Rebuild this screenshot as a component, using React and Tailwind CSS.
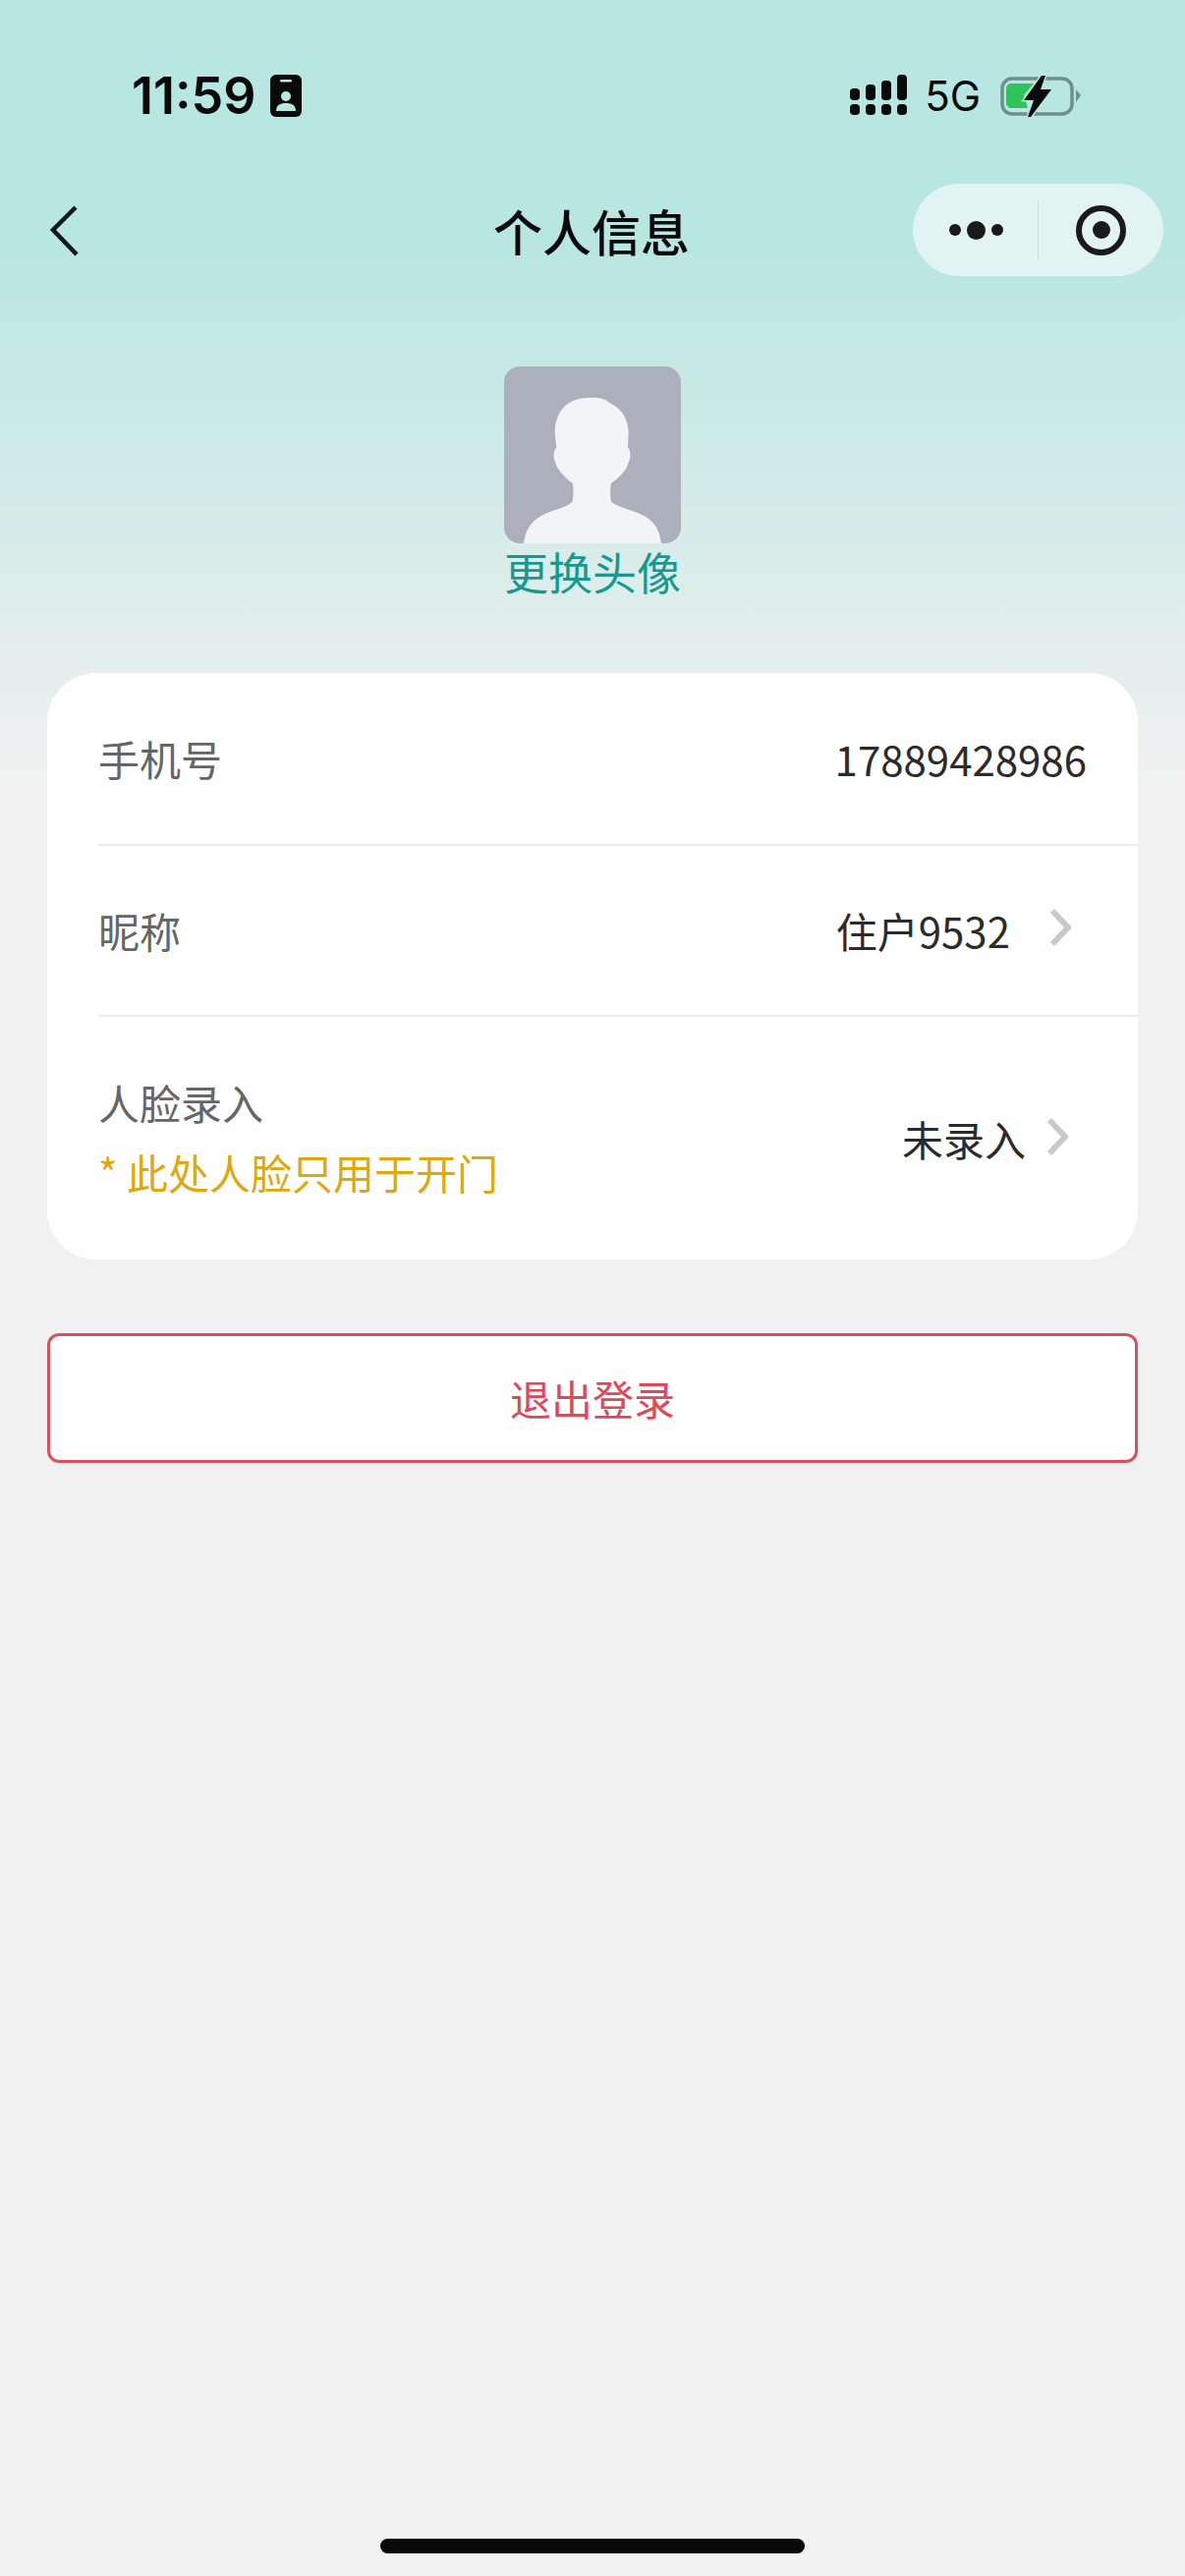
const cjk = "font-['Noto_Sans_CJK_SC','Noto_Sans',sans-serif]";

function Signal() {
  return (
    <svg width="58" height="42" viewBox="0 0 58 42" className="mt-[-2px]">
      <g fill="#0a0a0a">
        <rect x="0" y="14" width="10" height="12" rx="4" />
        <rect x="16" y="10" width="10" height="16" rx="4" />
        <rect x="32" y="6" width="10" height="20" rx="4" />
        <rect x="48" y="0" width="10" height="26" rx="4" />
        <rect x="0" y="30" width="10" height="11" rx="4" />
        <rect x="16" y="30" width="10" height="11" rx="4" />
        <rect x="32" y="30" width="10" height="11" rx="4" />
        <rect x="48" y="30" width="10" height="11" rx="4" />
      </g>
    </svg>
  );
}

function Battery() {
  return (
    <svg width="84" height="42" viewBox="0 0 84 42">
      <rect x="2" y="3" width="71" height="36" rx="10" fill="none" stroke="#6f8f8d" strokeWidth="3.5" />
      <path d="M77 14 L82 20 L77 27 Z" fill="#6f8f8d" />
      <path d="M11 8 H34 L24 20 L28 33 H11 A5 5 0 0 1 6 28 V13 A5 5 0 0 1 11 8 Z" fill="#2fc45a" />
      <path d="M42 0 L46 0 L41 14 H52 L31 42 L28 42 L34 25 H24 Z" fill="#0a0a0a" stroke="#b8e6e0" strokeWidth="3" paintOrder="stroke" />
    </svg>
  );
}

function BadgeIcon() {
  return (
    <svg width="32" height="43" viewBox="0 0 32 43">
      <rect width="32" height="43" rx="6" fill="#0a0a0a" />
      <rect x="10" y="5" width="12" height="2.5" rx="1" fill="#b8e6e0" />
      <circle cx="16" cy="22" r="5" fill="#b8e6e0" />
      <path d="M6 37 C6 31 10 29 16 29 C22 29 26 31 26 37 Z" fill="#b8e6e0" />
    </svg>
  );
}

function Silhouette() {
  return (
    <svg viewBox="100 70 540 540" className="w-full h-full">
      <path
        fill="#f2f4f6"
        d="M370 165 C395 165 412 170 420 180 C455 195 478 225 480 270 L478 318 C488 325 487 350 480 362 C476 385 450 412 426 428 C424 450 424 470 428 484 C450 502 495 508 525 525 C560 542 575 570 580 610 L160 610 C165 570 180 545 215 525 C245 508 290 502 308 484 C312 470 312 450 310 428 C288 412 262 385 256 362 C250 345 250 325 260 318 L255 270 C256 225 275 190 310 175 C325 168 345 165 370 165 Z"
      />
    </svg>
  );
}

function Chevron({ className }) {
  return (
    <svg width="22" height="40" viewBox="0 0 22 40" className={className}>
      <path d="M3 3 L19 20 L3 37" fill="none" stroke="#c9c9c9" strokeWidth="6" strokeLinejoin="miter" />
    </svg>
  );
}

export default function App() {
  return (
    <div className={`${cjk} w-[1206px] min-h-[2622px] flex flex-col bg-[linear-gradient(180deg,#b8e6e0_0px,#b8e6e0_240px,#f1f1f1_800px)]`}>
      {/* status bar */}
      <div className="h-[187px] flex justify-between items-start pt-[76px] pl-[134px] pr-[104px]">
        <div className="flex items-center gap-[14px] h-[43px]">
          <span className="font-['Inter',sans-serif] font-semibold text-[52px] leading-none text-[#0a0a0a]">11:59</span>
          <BadgeIcon />
        </div>
        <div className="flex items-center h-[43px]">
          <Signal />
          <span className="ml-[18px] mr-[20px] font-['Inter',sans-serif] text-[42px] leading-none text-[#0a0a0a]">5G</span>
          <Battery />
        </div>
      </div>

      {/* nav */}
      <div className="h-[94px] relative flex items-center justify-center">
        <svg width="30" height="52" viewBox="0 0 30 52" className="absolute left-[50px] top-[22px]">
          <path d="M27 2 L4 25 L28 50" fill="none" stroke="#101820" strokeWidth="4.5" />
        </svg>
        <h1 className="text-[50px] leading-none font-medium text-[#0a0a0a] mt-[-1px] ml-[-2px]">个人信息</h1>
        <div className="absolute right-[22px] top-0 w-[255px] h-[94px] rounded-full bg-[#e2f4f1] flex items-center">
          <div className="w-[128px] h-[60px] border-r border-[#cfe0de] flex items-center justify-center gap-[6px] pl-[1px]">
            <span className="w-[12px] h-[12px] rounded-full bg-[#1a1a1a]" />
            <span className="w-[19px] h-[19px] rounded-full bg-[#1a1a1a]" />
            <span className="w-[12px] h-[12px] rounded-full bg-[#1a1a1a]" />
          </div>
          <div className="flex-1 flex items-center justify-center">
            <div className="w-[51px] h-[51px] rounded-full border-[6px] border-[#1a1a1a] flex items-center justify-center">
              <span className="w-[18px] h-[18px] rounded-full bg-[#1a1a1a]" />
            </div>
          </div>
        </div>
      </div>

      {/* avatar */}
      <div className="mt-[92px] flex flex-col items-center">
        <div className="w-[180px] h-[180px] rounded-[16px] bg-[#acafbc] overflow-hidden">
          <Silhouette />
        </div>
        <div className="mt-[-1px] text-[45px] leading-[60px] text-[#17998f]">更换头像</div>
      </div>

      {/* card */}
      <div className="mt-[73px] mx-[48px] bg-white rounded-[50px] text-[42px] leading-none">
        <div className="ml-[52px] h-[176px] border-b-2 border-[#ececec] flex items-center justify-between pr-[52px]">
          <span className="text-[#666666]">手机号</span>
          <span className="text-[#2b2b2b]">17889428986</span>
        </div>
        <div className="ml-[52px] h-[174px] border-b-2 border-[#ececec] flex items-center justify-between pr-[68px]">
          <span className="text-[#666666]">昵称</span>
          <div className="flex items-center">
            <span className="text-[#2b2b2b]">住户9532</span>
            <Chevron className="ml-[40px] mt-[-6px]" />
          </div>
        </div>
        <div className="ml-[52px] h-[247px] flex items-center justify-between pr-[71px]">
          <div className="flex flex-col gap-[29px] mt-[-2px]">
            <span className="text-[#666666]">人脸录入</span>
            <span className="text-[#e0a80f]">* 此处人脸只用于开门</span>
          </div>
          <div className="flex items-center">
            <span className="text-[#2b2b2b]">未录入</span>
            <Chevron className="ml-[21px] mt-[-3px]" />
          </div>
        </div>
      </div>

      {/* logout */}
      <button
        type="button"
        className="mt-[75px] mx-[48px] h-[132px] bg-white border-[3px] border-[#d9505f] rounded-[12px] text-[42px] leading-none text-[#e0485a]"
      >
        退出登录
      </button>

      {/* home indicator */}
      <div className="mt-auto mb-[23px] mx-auto w-[432px] h-[15px] rounded-full bg-[#0a0a0a]" />
    </div>
  );
}
